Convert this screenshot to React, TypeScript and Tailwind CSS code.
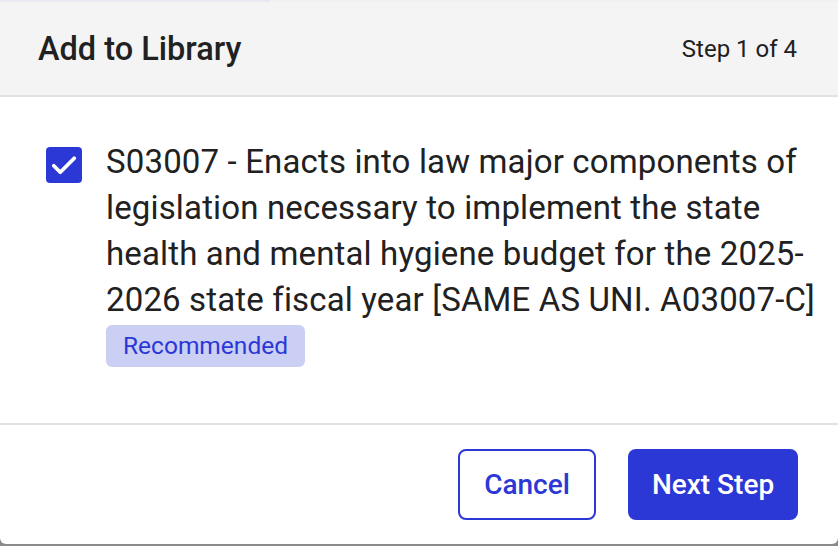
import React from "react";

export default function App() {
  return (
    <div
      className="w-[838px] h-[546px] overflow-hidden bg-[#8a8a8a] flex flex-col"
      style={{ fontFamily: "Roboto, 'Noto Sans', sans-serif" }}
    >
      <div className="h-[2px] flex shrink-0">
        <div className="w-[270px] bg-[#ebe7f3]" />
        <div className="flex-1 bg-[#f1f1f1]" />
      </div>
      <div className="w-[838px] h-[542px] bg-white flex flex-col rounded-b-[6px] overflow-hidden shrink-0">
        <div className="h-[95px] bg-[#f4f4f4] border-b-2 border-[#e2e2e2] flex items-center justify-between pl-[38px] pr-[41px] shrink-0">
          <div className="text-[32.5px] font-medium text-[#212121] leading-none mt-[1px]">Add to Library</div>
          <div className="text-[24px] text-[#212121] leading-none">Step 1 of 4</div>
        </div>
        <div className="flex-1 flex items-start gap-[24px] pl-[46px] pr-[10px] pt-[49px]">
          <div className="w-[36px] h-[36px] rounded-[4px] bg-[#2b38d6] flex items-center justify-center shrink-0 mt-[1px]">
            <svg width="30" height="30" viewBox="0 0 24 24" fill="none">
              <path d="M3.8 12.6l5.2 5.2L20.2 6.6" stroke="white" strokeWidth="3" strokeLinecap="round" strokeLinejoin="round" />
            </svg>
          </div>
          <div className="flex flex-col items-start">
            <div className="text-[33px] leading-[46px] tracking-[0.15px] text-[#212121] -mt-[7px] w-[722px]">
              S03007 - Enacts into law major components of legislation necessary to implement the state health and mental hygiene budget for the 2025-2026 state fiscal year [SAME AS UNI. A03007-C]
            </div>
            <div className="mt-[2px] h-[42px] px-[17px] rounded-[6px] bg-[#cbcff4] text-[#2b38d6] text-[24.5px] flex items-center">
              Recommended
            </div>
          </div>
        </div>
        <div className="h-[121px] border-t-2 border-[#e2e2e2] flex items-start justify-end gap-[32px] pr-[40px] pt-[24px] shrink-0">
          <button className="w-[138px] h-[71px] rounded-[8px] border-2 border-[#2b38d6] text-[#2b38d6] text-[28px] font-medium bg-white">
            Cancel
          </button>
          <button className="w-[170px] h-[71px] rounded-[8px] bg-[#2b38d6] text-white text-[28px] font-medium">
            Next Step
          </button>
        </div>
      </div>
    </div>
  );
}
